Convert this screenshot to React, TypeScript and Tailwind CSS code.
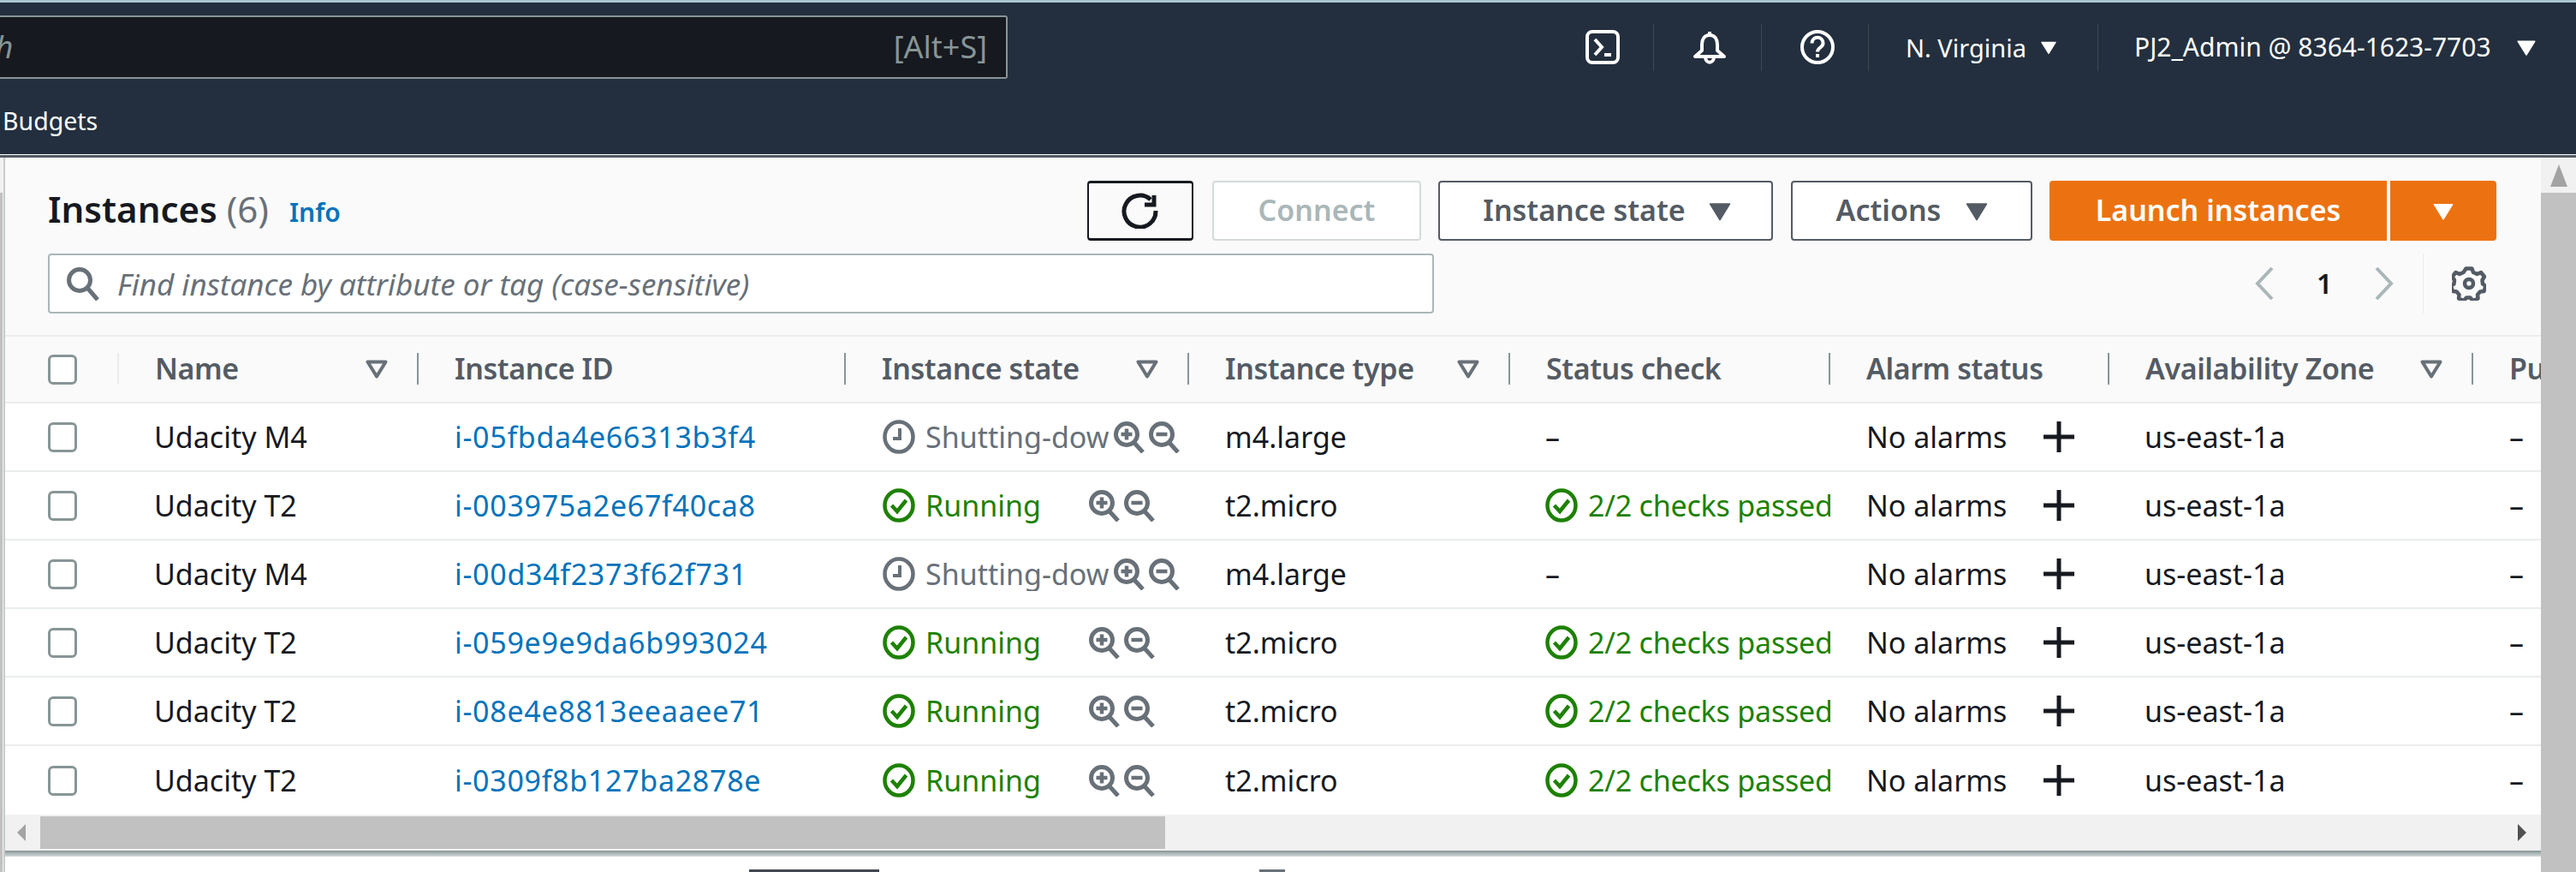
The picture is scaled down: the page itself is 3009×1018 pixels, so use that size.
import React from 'react';

const cols = 'grid grid-cols-[133px_350px_499px_401px_375px_374px_326px_425px_200px]';

const rows = [
  { name: 'Udacity M4', id: 'i-05fbda4e66313b3f4', state: 'down', type: 'm4.large' },
  { name: 'Udacity T2', id: 'i-003975a2e67f40ca8', state: 'run', type: 't2.micro' },
  { name: 'Udacity M4', id: 'i-00d34f2373f62f731', state: 'down', type: 'm4.large' },
  { name: 'Udacity T2', id: 'i-059e9e9da6b993024', state: 'run', type: 't2.micro' },
  { name: 'Udacity T2', id: 'i-08e4e8813eeaaee71', state: 'run', type: 't2.micro' },
  { name: 'Udacity T2', id: 'i-0309f8b127ba2878e', state: 'run', type: 't2.micro' },
];

const Caret = ({ className }: { className: string }) => (
  <svg viewBox="0 0 16 16" className={className} fill="currentColor">
    <path d="M1.5 3.5h13L8 14z" stroke="currentColor" strokeWidth="1" strokeLinejoin="round" />
  </svg>
);

const SortIcon = () => (
  <svg viewBox="0 0 26 22" className="w-[26px] h-[22px] text-[#687078] shrink-0">
    <path d="M2.500 2.500h21L13 19.500z" fill="none" stroke="currentColor" strokeWidth="4" strokeLinejoin="round" />
  </svg>
);

const Checkbox = () => (
  <div className="w-[34px] h-[35px] rounded-[6px] border-[3px] border-[#879596] bg-white" />
);

const HeadCell = ({ label, sort, sep = true }: { label: string; sort?: boolean; sep?: boolean }) => (
  <div className="relative flex items-center h-full pl-[42px] pr-[36px] whitespace-nowrap overflow-hidden">
    <span className="font-semibold tracking-[-0.4px] mb-[3px]">{label}</span>
    {sort && <span className="ml-auto"><SortIcon /></span>}
    {sep && <div className="absolute right-0 top-[19px] h-[37px] w-[2px] bg-[#879596]" />}
  </div>
);

const ClockIcon = () => (
  <svg viewBox="0 0 38 40" className="w-[38px] h-[40px] shrink-0 text-[#687078]" fill="none" stroke="currentColor">
    <ellipse cx="19" cy="20" rx="16.5" ry="17.5" strokeWidth="4.5" />
    <path d="M20 10v12h-8" strokeWidth="4" />
  </svg>
);

const CheckIcon = () => (
  <svg viewBox="0 0 38 40" className="w-[38px] h-[40px] shrink-0 text-[#1d8102]" fill="none" stroke="currentColor">
    <ellipse cx="19" cy="20" rx="16.5" ry="17.5" strokeWidth="4.5" />
    <path d="M10.500 20l6.500 7 10.500-13" strokeWidth="4.5" />
  </svg>
);

const ZoomIcon = ({ plus }: { plus?: boolean }) => (
  <svg viewBox="0 0 38 37" className="w-[38px] h-[37px] shrink-0 text-[#687078]" fill="none" stroke="currentColor">
    <circle cx="16" cy="15" r="12.5" strokeWidth="5" />
    <path d="M25 25l10 11" strokeWidth="5" />
    <path d={plus ? 'M9.500 15h13M16 8.500v13' : 'M9.500 15h13'} strokeWidth="4.5" />
  </svg>
);

const GearIcon = () => (
  <svg viewBox="0 0 40 40" className="ml-[33px] w-[40px] h-[40px] text-[#545b64]" fill="none" stroke="currentColor" strokeWidth="4.5" strokeLinejoin="round">
    <path d="M16.500 2.500h7l1.500 4.500 4.500 2 4.500-2 4 5-2.500 4 .5 4.500 3.500 2.500-2 6-4.500.5-3 3.500.5 4.500-6 2.500-3-3.500h-4.500l-3 3.500-6-2.500.5-4.500-3-3.500-4.500-.5-2-6 3.500-2.500.5-4.500-2.500-4 4-5 4.500 2 4.500-2z" />
    <circle cx="20" cy="20" r="5" />
  </svg>
);

const StateCell = ({ state }: { state: string }) => (
  <div className="flex items-center h-full pl-[43px] whitespace-nowrap">
    {state === 'run' ? (
      <div className="flex items-center w-[240px] text-[#1d8102]">
        <CheckIcon />
        <span className="ml-[12px]">Running</span>
      </div>
    ) : (
      <div className="flex items-center w-[264px] mr-[5px] overflow-hidden text-[#687078]">
        <ClockIcon />
        <span className="ml-[12px]">Shutting-down</span>
      </div>
    )}
    <ZoomIcon plus />
    <span className="ml-[3px]"><ZoomIcon /></span>
  </div>
);

const Row = ({ row }: { row: (typeof rows)[number] }) => (
  <div className={`${cols} h-[80px] items-center border-b-[2px] border-[#eaeded] bg-white text-[#16191f] last:border-b-0`}>
    <div className="pl-[50px]"><Checkbox /></div>
    <div className="pl-[41px] whitespace-nowrap">{row.name}</div>
    <div className="pl-[42px] whitespace-nowrap text-[#0073bb] tracking-[0.7px]">{row.id}</div>
    <StateCell state={row.state} />
    <div className="pl-[42px]">{row.type}</div>
    <div className="pl-[41px] flex items-center whitespace-nowrap overflow-hidden">
      {row.state === 'run' ? (
        <span className="flex items-center text-[#1d8102]">
          <CheckIcon />
          <span className="ml-[12px] tracking-[-0.2px]">2/2 checks passed</span>
        </span>
      ) : (
        '–'
      )}
    </div>
    <div className="pl-[42px] flex items-center whitespace-nowrap">
      <span>No alarms</span>
      <svg viewBox="0 0 36 36" className="w-[36px] h-[36px] ml-[43px]" stroke="currentColor" strokeWidth="5">
        <path d="M0 18h36M18 0v36" />
      </svg>
    </div>
    <div className="pl-[41px]">us-east-1a</div>
    <div className="pl-[42px]">–</div>
  </div>
);

export default function App() {
  return (
    <div className="w-[3009px] h-[1018px] overflow-hidden bg-white flex flex-col font-['Noto_Sans',sans-serif] text-[34px] leading-none">
      <div className="h-[3px] bg-[#a9c4cc] shrink-0" />
      <header className="h-[177px] bg-[#232f3e] text-white shrink-0">
        <div className="flex items-center pt-[15px] h-[89px]">
          <div className="w-[1177px] h-[74px] flex items-center overflow-hidden rounded-r-[3px] border-y-2 border-r-2 border-[#879596] bg-[#16191f] text-[#879596] pr-[22px] text-[36px]">
            <span className="italic ml-[-92px]">Search</span>
            <span className="ml-auto">[Alt+S]</span>
          </div>
          <div className="flex items-center h-[55px] ml-[675px] whitespace-nowrap">
            <svg viewBox="0 0 40 40" className="w-[40px] h-[40px]" fill="none" stroke="white" strokeWidth="4">
              <rect x="2" y="2" width="36" height="36" rx="6" />
              <path d="M11 11l8 9-8 9M22 29h8" />
            </svg>
            <div className="ml-[39px] w-[1px] h-full bg-[#414750]" />
            <svg viewBox="0 0 40 40" className="w-[40px] h-[40px] ml-[45px]" fill="none" stroke="white" strokeWidth="4">
              <path d="M20 2v4M20 6c-6 0-9 5-9 11v7l-8 7h34l-8-7v-7c0-6-3-11-9-11zM15 31c0 9 10 9 10 0" strokeLinejoin="round" />
            </svg>
            <div className="ml-[40px] w-[1px] h-full bg-[#414750]" />
            <svg viewBox="0 0 40 40" className="w-[40px] h-[40px] ml-[45px]" fill="none" stroke="white" strokeWidth="4">
              <circle cx="20" cy="20" r="18" />
              <path d="M13.500 15.500c0-9 13-9 13 0 0 5-6.500 5-6.500 10" />
              <path d="M20 28v4" />
            </svg>
            <div className="ml-[39px] w-[1px] h-full bg-[#414750]" />
            <div className="ml-[43px] w-[224px] flex items-center text-[29px]">
              <span>N. Virginia</span>
              <Caret className="w-[20px] h-[20px] ml-[16px]" />
            </div>
            <div className="w-[1px] h-full bg-[#414750]" />
            <div className="ml-[42px] flex items-center text-[30px]">
              <span>PJ2_Admin @ 8364-1623-7703</span>
              <Caret className="w-[24px] h-[24px] ml-[29px]" />
            </div>
          </div>
        </div>
        <div className="pl-[3px] pt-[35px] text-[28.5px] h-[88px]">Budgets</div>
      </header>
      <div className="h-[4px] shrink-0 bg-white border-b-[3px] border-[#545b64]" />

      <div className="flex flex-1 min-h-0">
        <div className="w-[6px] shrink-0 bg-[#f1f1f1] border-r-[2px] border-[#c8cccc] pt-[41px]">
          <div className="w-[3px] h-full bg-[#c1c1c1]" />
        </div>
        <main className="w-[2962px] shrink-0 flex flex-col overflow-hidden">
          <section className="h-[209px] bg-[#fafafa] shrink-0 border-b-[2px] border-[#eaeded] pl-[50px] pr-[52px] pt-[27px]">
            <div className="flex items-center h-[70px]">
              <h1 className="mt-[-4px] text-[42px] font-semibold text-[#16191f] whitespace-nowrap">
                Instances <span className="font-normal text-[#687078]">(6)</span>
              </h1>
              <a className="ml-[24px] mt-[4px] text-[30px] font-semibold text-[#0073bb]">Info</a>
              <button className="ml-auto mr-[22px] w-[124px] h-[70px] flex items-center justify-center rounded-[4px] border-[2px] border-y-[3px] border-[#16191f] bg-[#fafafa]">
                <svg viewBox="0 0 44 42" className="w-[44px] h-[42px]" fill="none" stroke="#16191f" strokeWidth="5">
                  <path d="M34 8A18.500 18.500 0 1 0 40 21" />
                  <path d="M38 3v11H27" />
                </svg>
              </button>
              <button className="w-[244px] h-[70px] pb-[3px] rounded-[4px] border-[2px] border-[#d5dbdb] bg-white font-semibold text-[#aab7b8]">Connect</button>
              <button className="ml-[20px] w-[391px] h-[70px] pb-[3px] pl-[6px] flex items-center justify-center rounded-[4px] border-[2px] border-[#545b64] bg-white font-semibold text-[#545b64]">
                Instance state
                <Caret className="w-[32px] h-[28px] ml-[24px] mt-[3px]" />
              </button>
              <button className="ml-[21px] w-[282px] h-[70px] pb-[3px] pl-[4px] flex items-center justify-center rounded-[4px] border-[2px] border-[#545b64] bg-white font-semibold text-[#545b64]">
                Actions
                <Caret className="w-[32px] h-[28px] ml-[26px] mt-[3px]" />
              </button>
              <button className="ml-[20px] w-[394px] h-[70px] pb-[3px] rounded-l-[4px] bg-[#ec7211] font-semibold text-white">Launch instances</button>
              <button className="ml-[4px] w-[124px] h-[70px] flex items-center justify-center rounded-r-[4px] bg-[#ec7211] text-white">
                <Caret className="w-[30px] h-[26px]" />
              </button>
            </div>
            <div className="flex items-center h-[70px] mt-[15px]">
              <div className="w-[1619px] h-[70px] flex items-center rounded-[4px] border-[2px] border-[#aab7b8] bg-white pl-[20px]">
                <svg viewBox="0 0 38 40" className="w-[38px] h-[40px]" fill="none" stroke="#687078" strokeWidth="5">
                  <circle cx="15" cy="16" r="12.500" />
                  <path d="M24 25l12 14" />
                </svg>
                <span className="ml-[21px] italic text-[#687078] text-[35px] whitespace-nowrap">Find instance by attribute or tag (case-sensitive)</span>
              </div>
              <svg viewBox="0 0 22 38" className="ml-[959px] w-[22px] h-[38px]" fill="none" stroke="#aab7b8" strokeWidth="4">
                <path d="M20 1L3 19l17 18" />
              </svg>
              <span className="ml-[50px] w-[16px] font-semibold text-[#16191f] text-[32px]">1</span>
              <svg viewBox="0 0 22 38" className="ml-[52px] w-[22px] h-[38px]" fill="none" stroke="#aab7b8" strokeWidth="4">
                <path d="M2 1l17 18L2 37" />
              </svg>
              <div className="ml-[34px] w-[1px] h-full bg-[#eaeded]" />
              <GearIcon />
            </div>
          </section>

          <div className={`${cols} h-[78px] shrink-0 items-center bg-[#fafafa] border-b-[2px] border-[#eaeded] text-[#545b64]`}>
            <div className="relative h-full flex items-center pl-[50px]">
              <Checkbox />
              <div className="absolute right-0 top-[19px] h-[37px] w-[2px] bg-[#eaeded]" />
            </div>
            <HeadCell label="Name" sort />
            <HeadCell label="Instance ID" />
            <HeadCell label="Instance state" sort />
            <HeadCell label="Instance type" sort />
            <HeadCell label="Status check" />
            <HeadCell label="Alarm status" />
            <HeadCell label="Availability Zone" sort />
            <HeadCell label="Public IPv4 DNS" sep={false} />
          </div>

          <div className="shrink-0">
            {rows.map((row) => (
              <Row key={row.id} row={row} />
            ))}
          </div>

          <div className="h-[42px] shrink-0 flex items-center bg-[#f1f1f1]">
            <svg viewBox="0 0 10 20" className="ml-[14px] w-[10px] h-[20px]" fill="#a3a3a3"><path d="M10 0v20L0 10z" /></svg>
            <div className="ml-[17px] w-[1314px] h-[38px] bg-[#c1c1c1]" />
            <svg viewBox="0 0 10 20" className="ml-[1580px] w-[10px] h-[20px]" fill="#505050"><path d="M0 0v20l10-10z" /></svg>
          </div>
          <div className="h-[7px] shrink-0 bg-gradient-to-b from-[#879596] to-[#d5dbdb]" />
          <div className="flex-1 flex items-end">
            <div className="ml-[869px] w-[152px] h-[3px] bg-[#414750]" />
            <div className="ml-[444px] w-[30px] h-[3px] bg-[#687078]" />
          </div>
        </main>
        <aside className="w-[41px] shrink-0 flex flex-col">
          <div className="h-[41px] bg-[#f1f1f1] flex items-center justify-center">
            <svg viewBox="0 0 20 26" className="w-[20px] h-[26px]" fill="#a3a3a3"><path d="M10 0l10 26H0z" /></svg>
          </div>
          <div className="flex-1 bg-[#c1c1c1]" />
        </aside>
      </div>
    </div>
  );
}
